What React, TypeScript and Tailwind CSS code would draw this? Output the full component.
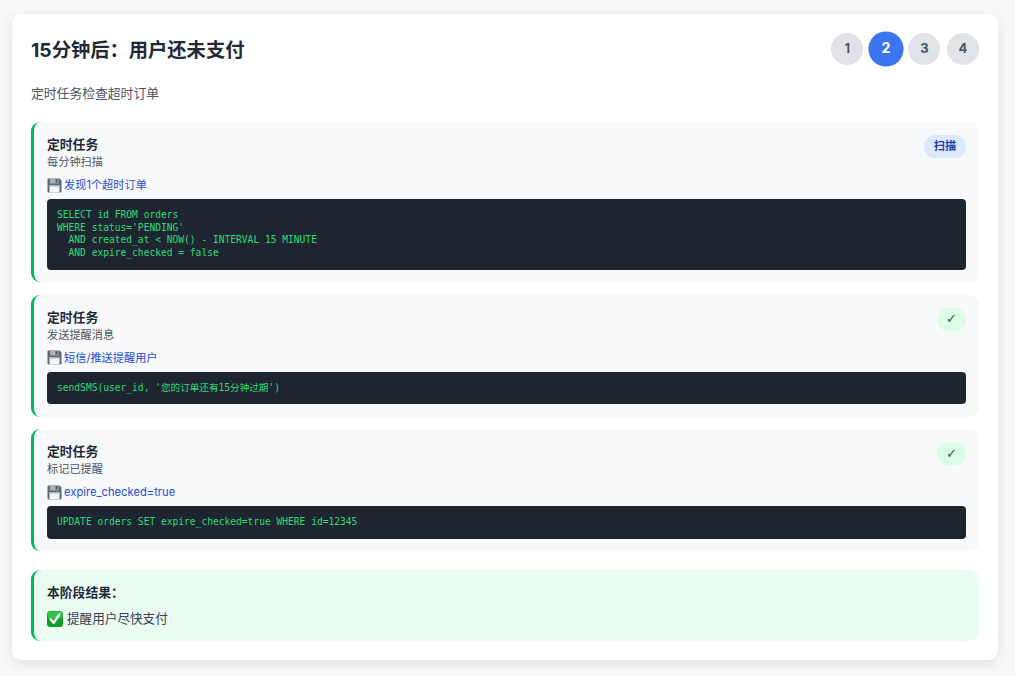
const cjk = "font-['Inter','Noto_Sans_CJK_SC',sans-serif]";

const FloppyIcon = () => (
	<svg width="15" height="15" viewBox="0 0 15 15" className="shrink-0">
		<path d="M0.5 1.5a1 1 0 0 1 1-1h11l2 2v11a1 1 0 0 1-1 1h-12a1 1 0 0 1-1-1z" fill="#5d6872" />
		<rect x="3" y="0.5" width="8.5" height="5" fill="#a9b3bc" />
		<rect x="8.5" y="1.2" width="2" height="3.4" fill="#4b5560" />
		<rect x="2.5" y="7.5" width="10" height="7" fill="#f1f3f5" />
		<rect x="2.5" y="7.5" width="10" height="1.2" fill="#b6c9dc" />
	</svg>
);

const CheckEmoji = () => (
	<svg width="16" height="16" viewBox="0 0 16 16" className="shrink-0">
		<rect x="0" y="0" width="16" height="16" rx="3.5" fill="#0b9f27" />
		<rect x="0.5" y="0.5" width="15" height="7" rx="3" fill="#34c24e" />
		<path d="M3.6 8.2l3 3.6 5.8-8.4" fill="none" stroke="#fff" strokeWidth="2.4" strokeLinecap="round" strokeLinejoin="round" />
	</svg>
);

interface StepProps {
	sub: string;
	note: string;
	code: string;
	badge: string;
	scan?: boolean;
}

const Step = ({ sub, note, code, badge, scan }: StepProps) => (
	<div className="rounded-[9px] border-l-[3px] border-[#00b85c] bg-[#f8f9fb] pl-[13px] pr-[13px] pt-[14px] pb-[12.5px]">
		<div className="flex items-start justify-between">
			<div>
				<div className="text-[12.8px] leading-[18px] font-semibold text-[#1f2937]">定时任务</div>
				<div className="text-[11.2px] leading-[16px] text-[#4b5563]">{sub}</div>
			</div>
			<span
				className={
					scan
						? "-mt-px flex h-[23px] w-[42px] items-center justify-center rounded-full bg-[#dbe8fe] text-[11.2px] font-semibold text-[#1e40af]"
						: "-mt-px flex h-[23px] w-[29px] items-center justify-center rounded-full bg-[#dcfce7] font-['DejaVu_Sans',sans-serif] text-[13px] font-bold text-[#166534]"
				}>
				{badge}
			</span>
		</div>
		<div className="mt-[7.4px] flex h-[16px] items-center gap-[2px] text-[11.2px] text-[#1d4ed8]">
			<FloppyIcon />
			<span>{note}</span>
		</div>
		<pre className="mt-[5.6px] rounded-[4px] bg-[#1f2530] px-[10px] py-[10px] font-['DejaVu_Sans_Mono','Noto_Sans_CJK_SC',monospace] text-[9.6px] leading-[12.7px] text-[#2bdc78]">
			{code}
		</pre>
	</div>
);

const App = () => {
	return (
		<div className={`min-h-[676px] bg-[#f8f9fb] pl-[12px] pr-[17px] pt-[14px] ${cjk}`}>
			<div className="h-[646px] rounded-[9px] bg-white px-[19px] pt-[19px] shadow-[0_4px_14px_rgba(0,0,0,0.1)]">
				<div className="flex items-center justify-between">
					<h1 className="pt-[2px] text-[19.3px] font-bold text-[#1f2937]">15分钟后：用户还未支付</h1>
					<div className="flex items-center gap-[6.6px]">
						<span className="flex h-[32px] w-[32px] items-center justify-center rounded-full bg-[#e1e3e8] text-[13px] font-bold text-[#4b5563]">1</span>
						<span className="flex h-[32px] w-[32px] scale-110 items-center justify-center rounded-full bg-[#3b76f0] text-[13px] font-bold text-white">2</span>
						<span className="flex h-[32px] w-[32px] items-center justify-center rounded-full bg-[#e1e3e8] text-[13px] font-bold text-[#4b5563]">3</span>
						<span className="flex h-[32px] w-[32px] items-center justify-center rounded-full bg-[#e1e3e8] text-[13px] font-bold text-[#4b5563]">4</span>
					</div>
				</div>

				<p className="mt-[20px] text-[12.8px] leading-[18px] text-[#4b5563]">定时任务检查超时订单</p>

				<div className="mt-[19px] flex flex-col gap-[12.3px]">
					<Step
						sub="每分钟扫描"
						note="发现1个超时订单"
						badge="扫描"
						scan
						code={"SELECT id FROM orders\nWHERE status='PENDING'\n  AND created_at < NOW() - INTERVAL 15 MINUTE\n  AND expire_checked = false"}
					/>
					<Step sub="发送提醒消息" note="短信/推送提醒用户" badge="✓" code={"sendSMS(user_id, '您的订单还有15分钟过期')"} />
					<Step sub="标记已提醒" note="expire_checked=true" badge="✓" code={"UPDATE orders SET expire_checked=true WHERE id=12345"} />
				</div>

				<div className="mt-[19px] h-[71px] rounded-[9px] border-l-[3px] border-[#00b85c] bg-[#ebfcf3] pl-[13px] pt-[14px]">
					<div className="text-[12.8px] leading-[18px] font-semibold text-[#1f2937]">本阶段结果：</div>
					<div className="mt-[8px] flex items-center gap-[4px] text-[12.6px] leading-[18px] text-[#374151]">
						<CheckEmoji />
						<span>提醒用户尽快支付</span>
					</div>
				</div>
			</div>
		</div>
	);
};

export default App;
